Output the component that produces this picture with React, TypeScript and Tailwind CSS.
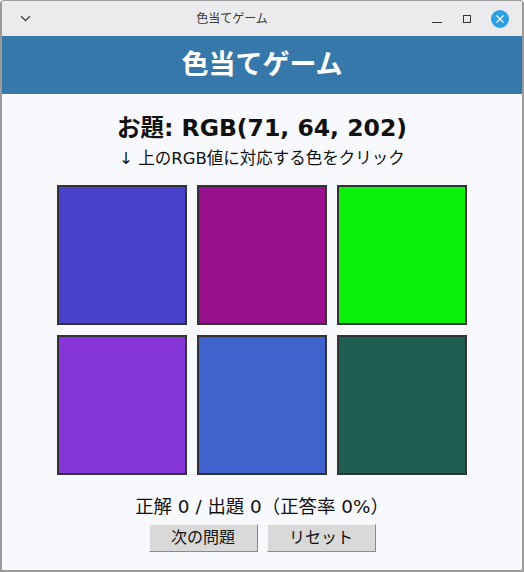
import React, { useState } from 'react';

const font = { fontFamily: '"DejaVu Sans", "Noto Sans CJK JP", sans-serif' };

const swatches = ['#4740ca', '#980f8b', '#0af00a', '#8534d8', '#3f62cc', '#1f5f53'];

export default function App() {
  const [correct, setCorrect] = useState(0);
  const [asked, setAsked] = useState(0);
  const rate = asked === 0 ? 0 : Math.round((correct / asked) * 100);

  return (
    <div
      className="w-[524px] h-[572px] flex flex-col bg-[#9a9a9a] px-[2px] pb-[2px] pt-[1px] rounded-t-[4px] overflow-hidden"
      style={font}
    >
      {/* タイトルバー */}
      <div className="h-[35px] flex items-center bg-[#ebebed] text-[#3a3a3a]">
        <div className="w-[46px] flex justify-center">
          <svg width="11" height="7" viewBox="0 0 11 7" fill="none" stroke="#444" strokeWidth="1.3">
            <path d="M1 1.2 L5.5 5.5 L10 1.2" />
          </svg>
        </div>
        <div className="flex-1 text-center text-[12px] leading-none">色当てゲーム</div>
        <div className="w-[106px] flex items-center">
          <div className="w-[10px] ml-[16px] h-[1.5px] bg-[#333] mt-[8px]" />
          <div className="w-[8px] h-[8px] border border-[#333] ml-[21px]" />
          <div className="w-[18px] h-[18px] rounded-full bg-[#2b9fe3] ml-[20px] flex items-center justify-center">
            <svg width="10" height="10" viewBox="0 0 10 10" stroke="white" strokeWidth="1.2">
              <path d="M1.5 1.5 L8.5 8.5 M8.5 1.5 L1.5 8.5" />
            </svg>
          </div>
        </div>
      </div>

      <div className="flex-1 flex flex-col items-center bg-[#f8f9fd]">
        <div className="w-full h-[58px] bg-[#3778ab] flex items-center justify-center text-white text-[27px] font-bold">
          色当てゲーム
        </div>

        <div className="mt-[18px] text-[23.5px] leading-[32px] font-bold text-[#111]">お題: RGB(71, 64, 202)</div>
        <div className="mt-[3px] text-[16.5px] leading-[24px] text-[#111]">↓ 上のRGB値に対応する色をクリック</div>

        <div className="mt-[14px] grid grid-cols-3 gap-[10px]">
          {swatches.map((c, i) => (
            <button
              key={i}
              onClick={() => {
                setAsked(asked + 1);
                if (i === 0) setCorrect(correct + 1);
              }}
              className="w-[130px] h-[140px] border-2 border-[#333]"
              style={{ backgroundColor: c }}
            />
          ))}
        </div>

        <div className="mt-[19px] text-[18.4px] leading-[26px] text-[#111]">
          正解 {correct} / 出題 {asked}（正答率 {rate}%）
        </div>

        <div className="mt-[4px] flex gap-[9px]">
          <button className="w-[109px] h-[28px] bg-[#d9d9d9] border border-t-[#f4f4f4] border-l-[#f4f4f4] border-b-[#8a8a8a] border-r-[#8a8a8a] text-[16px] text-[#111] leading-none">
            次の問題
          </button>
          <button
            onClick={() => {
              setCorrect(0);
              setAsked(0);
            }}
            className="w-[109px] h-[28px] bg-[#d9d9d9] border border-t-[#f4f4f4] border-l-[#f4f4f4] border-b-[#8a8a8a] border-r-[#8a8a8a] text-[16px] text-[#111] leading-none"
          >
            リセット
          </button>
        </div>
      </div>
    </div>
  );
}
